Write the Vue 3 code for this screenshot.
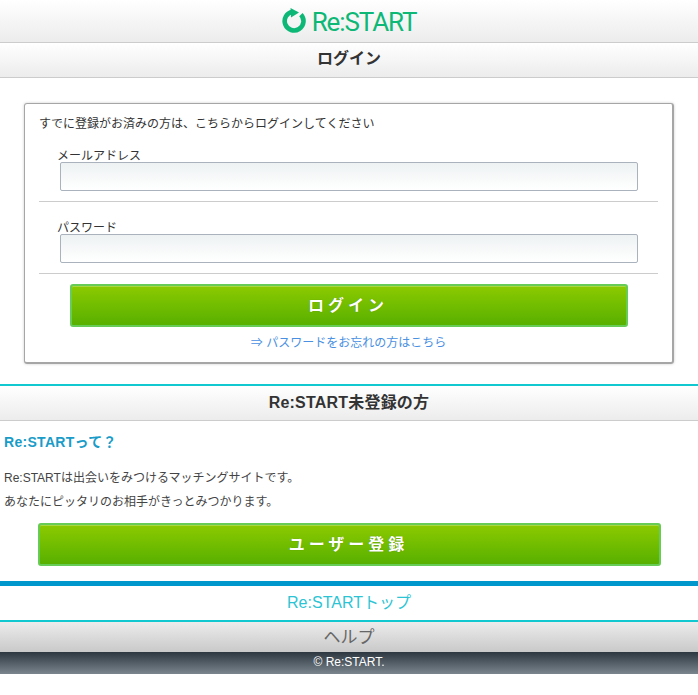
<template>
  <div class="page">
    <header class="logo-bar">
      <svg class="logo-mark" viewBox="0 0 24 26" width="24" height="26">
        <path d="M10.5 3.8a9.4 9.4 0 1 0 8.4 2.8" fill="none" stroke="#0db877" stroke-width="4.6" />
        <path d="M8.5 0 L17 4.6 L9 9.6 Z" fill="#0db877" />
      </svg>
      <span class="logo-text">Re:START</span>
    </header>
    <h2 class="bar-title">ログイン</h2>

    <section class="login-wrap">
      <form class="login-box" @submit.prevent>
        <p class="lead">すでに登録がお済みの方は、こちらからログインしてください</p>
        <div class="field">
          <label class="field-label">メールアドレス</label>
          <input class="field-input" type="text" />
        </div>
        <div class="field field-pw">
          <label class="field-label">パスワード</label>
          <input class="field-input" type="password" />
        </div>
        <button class="green-btn login-btn">ログイン</button>
        <a class="forgot">⇒ パスワードをお忘れの方はこちら</a>
      </form>
    </section>

    <h2 class="bar-title cyan-top">Re:START未登録の方</h2>
    <section class="about">
      <h3 class="about-title">Re:STARTって？</h3>
      <p class="about-line first">Re:STARTは出会いをみつけるマッチングサイトです。</p>
      <p class="about-line">あなたにピッタリのお相手がきっとみつかります。</p>
      <button class="green-btn signup-btn">ユーザー登録</button>
    </section>

    <a class="top-link">Re:STARTトップ</a>
    <a class="help-link">ヘルプ</a>
    <footer class="copy">© Re:START.</footer>
  </div>
</template>

<script setup>
</script>

<style scoped>
.page {
  width: 698px;
  font-family: "Liberation Sans", "Noto Sans CJK JP", sans-serif;
  color: #333;
  background: #fff;
}
.logo-bar {
  height: 42px;
  display: flex;
  align-items: center;
  justify-content: center;
  gap: 6px;
  background: linear-gradient(#fff, #ececec);
  border-bottom: 1px solid #ccc;
}
.logo-text {
  font-family: Roboto, sans-serif;
  font-size: 26px;
  line-height: 42px;
  color: #0db877;
  padding-top: 2px;
  letter-spacing: -1.1px;
}
.bar-title {
  margin: 0;
  height: 34px;
  line-height: 32px;
  text-align: center;
  font-size: 16px;
  font-weight: bold;
  color: #333;
  background: linear-gradient(#fff, #ececec);
  border-bottom: 1px solid #ccc;
}
.login-wrap {
  padding: 25px 24px 20px;
}
.login-box {
  box-sizing: border-box;
  height: 261px;
  width: 650px;
  padding: 11px 14px 0;
  border: 2px solid #a6a6a6;
  border-width: 1px 2px 2px 1px;
  border-radius: 3px;
  box-shadow: 0 0 3px rgba(0, 0, 0, 0.2);
  display: flex;
  flex-direction: column;
}
.lead {
  margin: 0;
  font-size: 12px;
  line-height: 18px;
  color: #333;
}
.field {
  margin-top: 16px;
  height: 52px;
  border-bottom: 1px solid #ccc;
  position: relative;
}
.field-pw {
  margin-top: 19px;
}
.field-label {
  display: block;
  height: 13px;
  line-height: 15px;
  margin-left: 18px;
  font-size: 12px;
  color: #333;
}
.field-input {
  box-sizing: border-box;
  display: block;
  width: 578px;
  height: 29px;
  margin: 0 0 0 21px;
  border: 1px solid #a9b2bd;
  border-radius: 2px;
  background: linear-gradient(#eef2f3, #fff);
  outline: none;
}
.green-btn {
  display: block;
  box-sizing: border-box;
  border: 2px solid #66cc55;
  border-radius: 3px;
  background: linear-gradient(#8cca00, #58b000);
  box-shadow: inset 0 1px 0 rgba(255, 255, 255, 0.25);
  color: #fff;
  font-family: inherit;
  font-weight: bold;
  font-size: 16px;
  text-shadow: 0 0 1px rgba(0, 0, 0, 0.3);
  padding: 0 2px 4px 0;
}
.login-btn {
  width: 558px;
  height: 43px;
  margin: 10px 0 0 31px;
  letter-spacing: 4px;
}
.forgot {
  display: block;
  margin-top: 8px;
  text-align: center;
  font-size: 12px;
  line-height: 16px;
  color: #4a90e2;
}
.cyan-top {
  border-top: 2px solid #11c8d0;
  line-height: 34px;
  letter-spacing: 0.2px;
}
.about {
  padding: 12px 0 15px;
}
.about-title {
  margin: 0 0 0 4px;
  font-size: 14px;
  line-height: 18px;
  font-weight: bold;
  color: #1a9cc8;
  letter-spacing: 0.3px;
}
.about-line {
  margin: 0 0 0 4px;
  font-size: 12px;
  line-height: 24px;
  color: #444;
}
.about-line.first {
  margin-top: 15px;
}
.signup-btn {
  width: 623px;
  height: 43px;
  margin: 9px 0 0 38px;
  letter-spacing: 4px;
}
.top-link {
  display: block;
  box-sizing: border-box;
  height: 39px;
  line-height: 34px;
  border-top: 5px solid #0098cc;
  text-align: center;
  font-size: 16px;
  color: #2cc4d4;
}
.help-link {
  display: block;
  box-sizing: border-box;
  height: 32px;
  line-height: 31px;
  border-top: 2px solid #11c8d0;
  text-align: center;
  font-size: 17px;
  color: #666;
  background: linear-gradient(#ececec, #c9c9c9);
}
.copy {
  height: 22px;
  line-height: 21px;
  text-align: center;
  font-size: 12px;
  color: #fff;
  background: linear-gradient(#2d3740, #7b858e);
}
</style>
